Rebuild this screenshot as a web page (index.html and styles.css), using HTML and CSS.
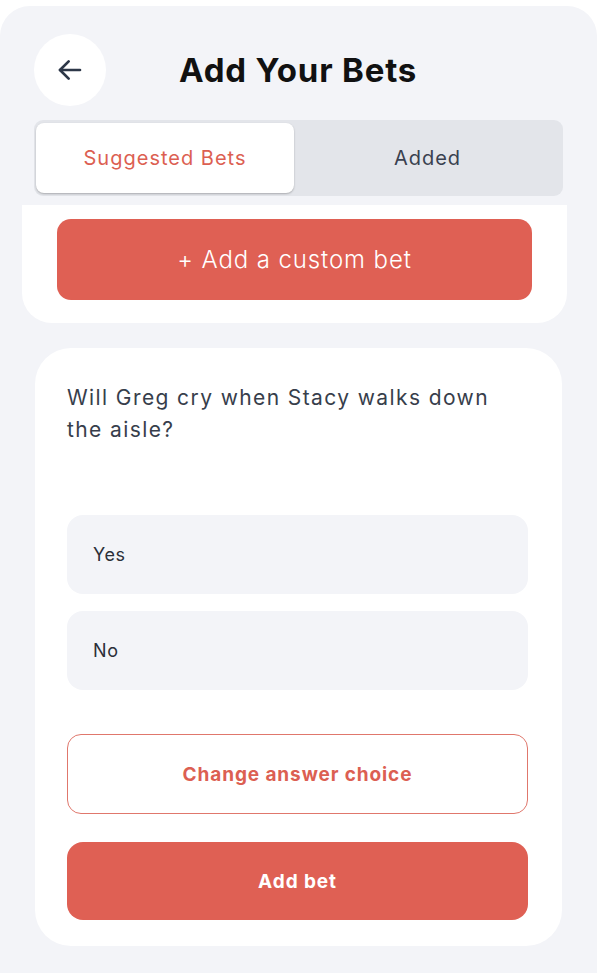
FILE: index.html
```html
<!DOCTYPE html>
<html>
<head>
<meta charset="utf-8">
<link rel="stylesheet" href="styles.css">
</head>
<body>
<div class="screen">
  <header class="header">
    <button class="back" aria-label="Back">
      <svg width="32" height="32" viewBox="0 0 24 24" fill="none" stroke="#2d3748" stroke-width="2" stroke-linecap="round" stroke-linejoin="round"><path d="M19.5 12H4.5"/><path d="M11 18.5L4.5 12L11 5.5"/></svg>
    </button>
    <h1 class="title">Add Your Bets</h1>
  </header>
  <div class="tabs">
    <div class="tab active">Suggested Bets</div>
    <div class="tab">Added</div>
  </div>
  <div class="top-card">
    <button class="custom-btn">+ Add a custom bet</button>
  </div>
  <div class="bet-card">
    <p class="question">Will Greg cry when Stacy walks down the aisle?</p>
    <div class="options">
      <div class="option">Yes</div>
      <div class="option">No</div>
    </div>
    <button class="outline-btn">Change answer choice</button>
    <button class="solid-btn">Add bet</button>
  </div>
</div>
</body>
</html>
```

FILE: styles.css
```css
* { box-sizing: border-box; }
html, body {
  margin: 0;
  padding: 0;
  background: #ffffff;
  font-family: "Inter", "Open Sans", sans-serif;
}
.screen {
  margin-top: 6px;
  width: 597px;
  height: 967px;
  background: #f3f4f8;
  border-radius: 30px 30px 0 0;
  padding-top: 28px;
  display: flex;
  flex-direction: column;
}
.header {
  display: flex;
  align-items: center;
  padding-left: 34px;
  height: 72px;
}
.back {
  width: 72px;
  height: 72px;
  border-radius: 50%;
  background: #ffffff;
  border: none;
  display: flex;
  align-items: center;
  justify-content: center;
  padding: 0;
  margin-right: 73px;
}
.title {
  margin: 0;
  font-size: 33px;
  font-weight: 700;
  color: #111111;
  letter-spacing: 0.8px;
}
.tabs {
  margin: 14px 34px 0 34px;
  height: 76px;
  background: #e3e5ea;
  border-radius: 9px;
  display: flex;
  padding: 3px 2px;
}
.tab {
  flex: 1;
  display: flex;
  align-items: center;
  justify-content: center;
  font-size: 20px;
  font-weight: 400;
  letter-spacing: 1px;
  color: #3a4150;
  border-radius: 8px;
}
.tab.active {
  flex: 0 0 258px;
  background: #ffffff;
  color: #dc5f52;
  box-shadow: 0 1px 2px rgba(0,0,0,0.25);
}
.top-card {
  margin: 9px 0 0 22px;
  width: 545px;
  background: #ffffff;
  border-radius: 0 0 30px 30px;
  padding: 14px 35px 23px 35px;
}
.custom-btn {
  width: 475px;
  height: 81px;
  border: none;
  border-radius: 14px;
  background: #df6054;
  color: #ffffff;
  font-family: inherit;
  font-size: 24px;
  font-weight: 300;
  letter-spacing: 0.9px;
}
.bet-card {
  margin: 25px 0 0 35px;
  width: 527px;
  background: #ffffff;
  border-radius: 36px;
  padding: 34px 34px 26px 32px;
}
.question {
  margin: 0;
  font-size: 21px;
  line-height: 32px;
  letter-spacing: 1.4px;
  color: #373e4b;
  width: 462px;
}
.options {
  margin-top: 69px;
  display: flex;
  flex-direction: column;
  gap: 17px;
}
.option {
  height: 79px;
  background: #f3f4f8;
  border-radius: 16px;
  display: flex;
  align-items: center;
  padding-left: 26px;
  font-size: 18px;
  font-weight: 400;
  letter-spacing: 0.6px;
  color: #2b2f38;
}
.outline-btn {
  display: block;
  margin-top: 44px;
  width: 461px;
  height: 80px;
  border: 1.5px solid #e0776c;
  border-radius: 14px;
  background: #ffffff;
  color: #dc5f52;
  font-family: inherit;
  font-size: 19px;
  font-weight: 700;
  letter-spacing: 0.9px;
}
.solid-btn {
  display: block;
  margin-top: 28px;
  width: 461px;
  height: 78px;
  border: none;
  border-radius: 16px;
  background: #df6054;
  color: #ffffff;
  font-family: inherit;
  font-size: 19px;
  font-weight: 700;
  letter-spacing: 0.9px;
}
```
